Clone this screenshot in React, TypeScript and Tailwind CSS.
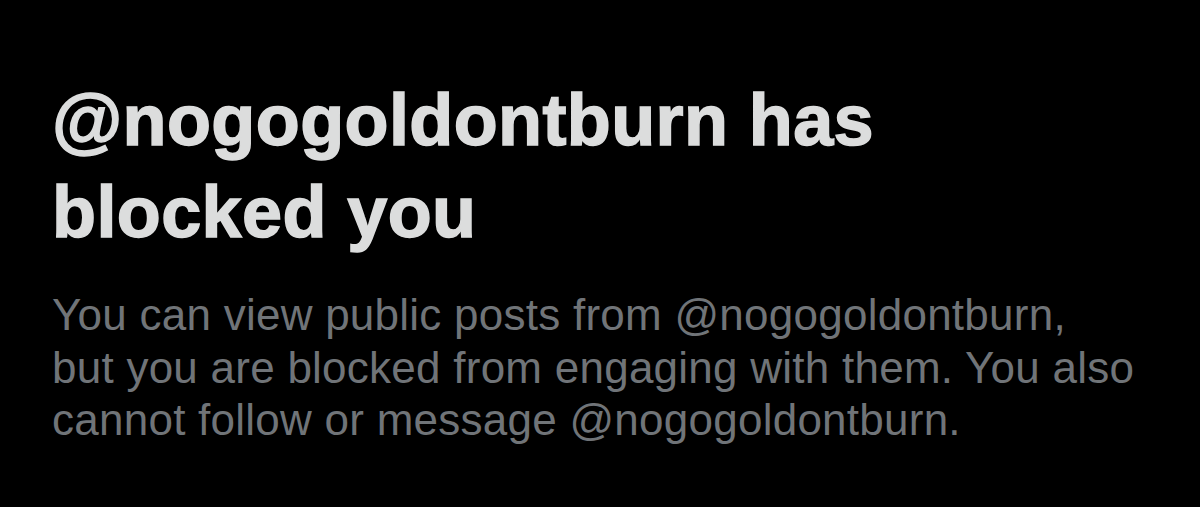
export default function App() {
  return (
    <div className="w-[1200px] h-[507px] bg-black overflow-hidden pl-[52px] pt-[74px]" style={{ fontFamily: '"Liberation Sans", Arial, sans-serif' }}>
      <h1 className="text-[72px] leading-[92px] font-bold tracking-[0.4px] text-[#dcdddd] [-webkit-text-stroke:1.5px_#dcdddd] whitespace-nowrap">
        @nogogoldontburn has
        <br />
        blocked you
      </h1>
      <p className="mt-[31px] text-[44px] leading-[52.5px] tracking-[0.25px] text-[#707478] whitespace-nowrap">
        You can view public posts from @nogogoldontburn,
        <br />
        but you are blocked from engaging with them. You also
        <br />
        cannot follow or message @nogogoldontburn.
      </p>
    </div>
  );
}
